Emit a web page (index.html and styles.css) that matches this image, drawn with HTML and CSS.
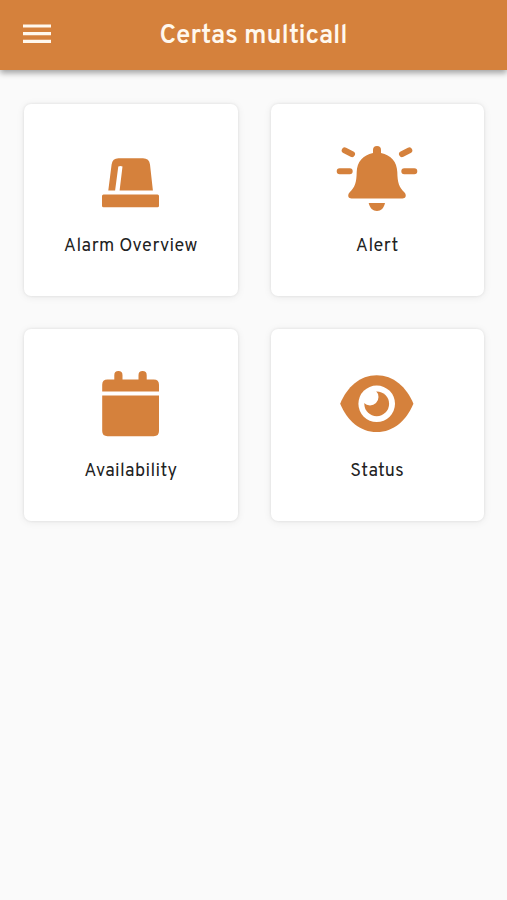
FILE: index.html
```html
<!DOCTYPE html>
<html lang="en">
<head>
<meta charset="utf-8">
<title>Certas multicall</title>
<link rel="stylesheet" href="styles.css">
</head>
<body>
<header class="bar">
  <button class="menu" aria-label="Menu"><svg width="28" height="20" viewBox="0 0 28 20"><path d="M0 2h28M0 9.7h28M0 17.3h28" stroke="currentColor" stroke-width="3.2"/></svg></button>
  <h1 class="title">Certas multicall</h1>
</header>
<main class="grid">
  <a class="card">
    <svg class="icon" viewBox="83 138 96 80"><rect x="102" y="194.5" width="57" height="12.7" rx="1.5"/><path d="M108.3 190.5L111.6 164.500Q112.500 158.300 118.500 158.300H143Q149.200 158.300 150 164.500L152.900 190.500H119.600L122.500 166.500Q120.500 165.500 118.300 166.500L115.100 190.500Z"/></svg>
    <span class="label">Alarm Overview</span>
  </a>
  <a class="card">
    <svg class="icon" viewBox="329 138 96 80"><path d="M373 153V150a4 4 0 0 1 8 0V153C391 155 397 162 397.300 172C397.500 183 399 187 404.500 192.500C407 195.500 405.500 198.500 402.500 198.500H351.500C348.500 198.500 347 195.500 349.500 192.500C355 187 356.500 183 356.700 172C357 162 363 155 373 153ZM368.700 203H385C384 208 381 211 377 211S369.700 208 368.700 203Z"/><path class="rays" d="M339.700 171.300h10M404.300 171.300h10M344.700 150.300l7.300 3.900M409.300 150.300l-7.300 3.900"/></svg>
    <span class="label">Alert</span>
  </a>
  <a class="card">
    <svg class="icon" viewBox="83 363 96 80"><path d="M102.200 391.400V384.800Q102.200 379.500 107.500 379.500H114.300V375.200a4.100 4.100 0 0 1 8.200 0V379.500H138.500V375.200a4.100 4.100 0 0 1 8.200 0V379.500H153.700Q159 379.500 159 384.800V391.400ZM102.200 395.500H159V431Q159 436.200 153.700 436.200H107.500Q102.200 436.200 102.200 431Z"/></svg>
    <span class="label">Availability</span>
  </a>
  <a class="card">
    <svg class="icon" viewBox="329 363 96 80"><path d="M340.200 403.700C347 387 360 375.300 376.700 375.300S406.500 387 413.400 403.700C406.500 420.500 393.500 432 376.700 432S347 420.500 340.200 403.700Z"/><circle class="white" cx="376.700" cy="403.800" r="18.300"/><circle cx="376.700" cy="403.800" r="12.400"/><path class="white" d="M376 391A6.500 6.500 0 1 1 364 403L363 392Z"/></svg>
    <span class="label">Status</span>
  </a>
</main>
</body>
</html>
```
FILE: styles.css
```css
* { box-sizing: border-box; }
body {
  margin: 0;
  min-height: 100vh;
  background: #fafafa;
  color: #222;
  font-family: Overpass, Roboto, sans-serif;
}
.bar {
  display: grid;
  grid-template-columns: 28px 1fr 28px;
  align-items: center;
  height: 70px;
  padding: 0 23px 2px;
  background: #d5813c;
  color: #fff8ee;
  box-shadow: 0 3px 6px rgba(0, 0, 0, .36);
}
.menu {
  display: flex;
  padding: 0;
  border: 0;
  background: none;
  color: inherit;
}
.title {
  margin: 0;
  padding-top: 5px;
  text-align: center;
  font-size: 26px;
  line-height: 32px;
  font-weight: 600;
  letter-spacing: -.05px;
  white-space: nowrap;
}
.grid {
  display: grid;
  grid-template-columns: 1fr 1fr;
  grid-auto-rows: 192px;
  gap: 33px;
  padding: 34px 23px 0 24px;
}
.card {
  display: flex;
  flex-direction: column;
  align-items: center;
  padding-top: 34px;
  border-radius: 7px;
  background: #fff;
  box-shadow: 0 0 3px rgba(0, 0, 0, .09), 0 1px 8px rgba(0, 0, 0, .07);
}
.icon {
  width: 96px;
  height: 80px;
  fill: #d5813c;
}
.rays {
  fill: none;
  stroke: #d5813c;
  stroke-width: 6;
  stroke-linecap: round;
}
.white { fill: #fff; }
.label {
  margin-top: 17px;
  font-size: 18px;
  line-height: 24px;
  letter-spacing: .4px;
  white-space: nowrap;
}
```
